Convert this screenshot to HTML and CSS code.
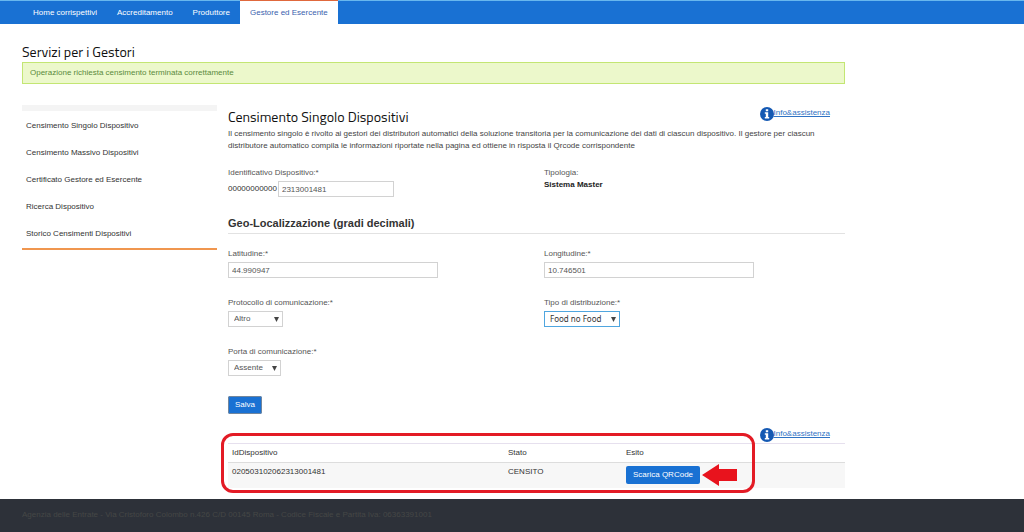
FILE: index.html
```html
<!DOCTYPE html>
<html lang="it">
<head>
<meta charset="utf-8">
<meta name="viewport" content="width=device-width, initial-scale=1">
<title>Servizi per i Gestori</title>
<link rel="stylesheet" href="styles.css">
</head>
<body>
<nav class="topbar">
  <a class="tab" href="#">Home corrispettivi</a>
  <a class="tab" href="#">Accreditamento</a>
  <a class="tab" href="#">Produttore</a>
  <a class="tab tab-active" href="#">Gestore ed Esercente</a>
</nav>
<div class="page">
  <h1 class="title">Servizi per i Gestori</h1>
  <p class="alert" role="status">Operazione richiesta censimento terminata correttamente</p>
  <div class="columns">
    <aside class="sidebar">
      <a class="side-link" href="#">Censimento Singolo Dispositivo</a>
      <a class="side-link" href="#">Censimento Massivo Dispositivi</a>
      <a class="side-link" href="#">Certificato Gestore ed Esercente</a>
      <a class="side-link" href="#">Ricerca Dispositivo</a>
      <a class="side-link" href="#">Storico Censimenti Dispositivi</a>
    </aside>
    <main class="main">
      <div class="main-head">
        <h2 class="title">Censimento Singolo Dispositivi</h2>
        <a class="info" href="#"><svg class="info-icon" viewBox="0 0 14 14" aria-hidden="true"><circle cx="7" cy="7" r="7" fill="#1459b3"/><path fill="#fff" d="M5.8 2.2h2.4v2.1H5.8zM4.8 5.3h3.4v4.8h1v1.5H4.8v-1.5h1V6.8h-1z"/></svg>Info&amp;assistenza</a>
      </div>
      <p class="intro">Il censimento singolo è rivolto ai gestori dei distributori automatici della soluzione transitoria per la comunicazione dei dati di ciascun dispositivo. Il gestore per ciascun distributore automatico compila le informazioni riportate nella pagina ed ottiene in risposta il Qrcode corrispondente</p>
      <form class="form">
        <div class="grid">
          <div class="field">
            <label class="label" for="ident">Identificativo Dispositivo:*</label>
            <div class="prefixed"><span>00000000000</span><input class="input input-short" id="ident" type="text" value="2313001481"></div>
          </div>
          <div class="field">
            <span class="label">Tipologia:</span>
            <strong class="value">Sistema Master</strong>
          </div>
        </div>
        <h3 class="section">Geo-Localizzazione (gradi decimali)</h3>
        <div class="grid">
          <div class="field">
            <label class="label" for="lat">Latitudine:*</label>
            <input class="input" id="lat" type="text" value="44.990947">
          </div>
          <div class="field">
            <label class="label" for="lon">Longitudine:*</label>
            <input class="input" id="lon" type="text" value="10.746501">
          </div>
          <div class="field">
            <label class="label" for="proto">Protocollo di comunicazione:*</label>
            <select class="select select-proto" id="proto"><option>Altro</option></select>
          </div>
          <div class="field">
            <label class="label" for="tipo">Tipo di distribuzione:*</label>
            <select class="select select-focus" id="tipo"><option>Food no Food</option></select>
          </div>
          <div class="field">
            <label class="label" for="porta">Porta di comunicazione:*</label>
            <select class="select select-porta" id="porta"><option>Assente</option></select>
          </div>
        </div>
        <button class="button button-save" type="button">Salva</button>
      </form>
      <div class="result-head">
        <a class="info" href="#"><svg class="info-icon" viewBox="0 0 14 14" aria-hidden="true"><circle cx="7" cy="7" r="7" fill="#1459b3"/><path fill="#fff" d="M5.8 2.2h2.4v2.1H5.8zM4.8 5.3h3.4v4.8h1v1.5H4.8v-1.5h1V6.8h-1z"/></svg>Info&amp;assistenza</a>
      </div>
      <div class="result">
        <table class="table">
          <colgroup><col class="col-id"><col class="col-state"><col></colgroup>
          <thead><tr><th>IdDispositivo</th><th>Stato</th><th>Esito</th></tr></thead>
          <tbody><tr><td>020503102062313001481</td><td>CENSITO</td><td><div class="outcome"><button class="button" type="button">Scarica QRCode</button><svg class="arrow" viewBox="0 0 36 22" aria-hidden="true"><path fill="#e8131d" d="M0 11 17 0v5h18v12H17v5z"/></svg></div></td></tr></tbody>
        </table>
        <div class="highlight"></div>
      </div>
    </main>
  </div>
</div>
<footer class="footer">Agenzia delle Entrate - Via Cristoforo Colombo n.426 C/D 00145 Roma - Codice Fiscale e Partita Iva: 06363391001</footer>
</body>
</html>
```
FILE: styles.css
```css
* { box-sizing: border-box; }
body {
  margin: 0;
  min-height: 100vh;
  display: flex;
  flex-direction: column;
  font: 8px/12px "Liberation Sans", Arial, sans-serif;
  color: #333;
  background: #fff;
}
h1, h2, h3, p { margin: 0; }
.topbar {
  display: flex;
  height: 24px;
  padding-left: 23px;
  background: #1971d3;
  border-top: 1px solid #68b7ee;
}
.tab {
  padding: 0 10px;
  line-height: 23px;
  color: #fff;
  text-decoration: none;
}
.tab-active {
  margin-top: -1px;
  border-top: 1px solid #e0683c;
  background: #fff;
  color: #3a5fae;
}
.page {
  width: 100%;
  max-width: 867px;
  padding: 18px 22px 11px;
}
.title {
  font: 14px/20px "Titillium Web", "Noto Sans", sans-serif;
  color: #111;
}
.alert {
  padding: 4px 7px;
  border: 1px solid #c3e673;
  background: #ecf8cb;
  color: #5a8a3c;
}
.columns { display: flex; gap: 11px; margin-top: 21px; }
.sidebar {
  flex: 0 0 195px;
  align-self: flex-start;
  display: flex;
  flex-direction: column;
  padding: 1px 0;
  border-top: 6px solid #f4f4f4;
  border-bottom: 2px solid #f0964f;
}
.side-link {
  padding-left: 4px;
  line-height: 27px;
  color: #333;
  text-decoration: none;
}
.main { flex: 1; min-width: 0; }
.main-head, .result-head {
  display: flex;
  justify-content: space-between;
  padding-right: 15px;
}
.main-head { padding-top: 2px; height: 23px; }
.result-head { justify-content: flex-end; margin-top: 14px; }
.info {
  display: flex;
  height: 15px;
  align-items: flex-start;
  color: #2f73c4;
}
.info-icon { width: 14px; height: 14px; }
.intro { color: #444; }
.form { padding-top: 15px; }
.grid { display: grid; grid-template-columns: 1fr 1fr; gap: 19px 15px; }
.field { display: flex; flex-direction: column; align-items: flex-start; }
.label { color: #555; }
.prefixed { display: flex; align-items: center; gap: 1px; margin-top: 2px; }
.value { color: #222; }
.input, .select {
  height: 16px;
  border: 1px solid #d2d2d2;
  border-radius: 0;
  background: #fff;
  font: inherit;
  color: #555;
}
.input { width: 210px; padding: 0 3px; }
.input-short { width: 116px; }
.field > .input, .field > .select { margin-top: 2px; }
.select {
  appearance: none;
  padding: 0 5px;
  background: #fff url("data:image/svg+xml,%3Csvg xmlns='http://www.w3.org/2000/svg' viewBox='0 0 5 5'%3E%3Cpath fill='%23444' d='M0 0h5L2.5 5z'/%3E%3C/svg%3E") right 3px center / 5px 5px no-repeat;
}
.select-proto { width: 55px; }
.select-porta { width: 53px; }
.select-focus {
  width: 76px;
  border-color: #50a6df;
  font-family: "Noto Sans", sans-serif;
  color: #333;
}
.section {
  margin: 18px 0 14px;
  padding-bottom: 2px;
  border-bottom: 1px solid #e2e2e2;
  font-size: 11px;
  line-height: 16px;
}
.button {
  height: 18px;
  padding: 0 7px;
  border: 0;
  border-radius: 2px;
  background: #1971d3;
  font: inherit;
  color: #fff;
}
.button-save { display: block; margin-top: 20px; outline: 1px solid #72869c; outline-offset: -1px; }
.result { position: relative; }
.table { width: 100%; table-layout: fixed; border-collapse: collapse; border-top: 1px solid #e6e0ee; }
.col-id { width: 276px; }
.col-state { width: 118px; }
.table th, .table td {
  padding: 3px 4px;
  font-weight: normal;
  text-align: left;
  vertical-align: top;
}
.table td { padding-bottom: 4px; background: #f7f7f7; border-top: 1px solid #ddd; }
.outcome { display: flex; align-items: center; gap: 2px; }
.arrow { width: 36px; height: 22px; margin: -2px 0; }
.highlight {
  position: absolute;
  top: -10px;
  left: -7px;
  width: 534px;
  height: 60px;
  border: 3px solid #e31b25;
  border-radius: 12px;
  pointer-events: none;
}
.footer {
  flex: 1;
  padding: 10px 22px;
  background: #2d3139;
  color: #454746;
}
```
